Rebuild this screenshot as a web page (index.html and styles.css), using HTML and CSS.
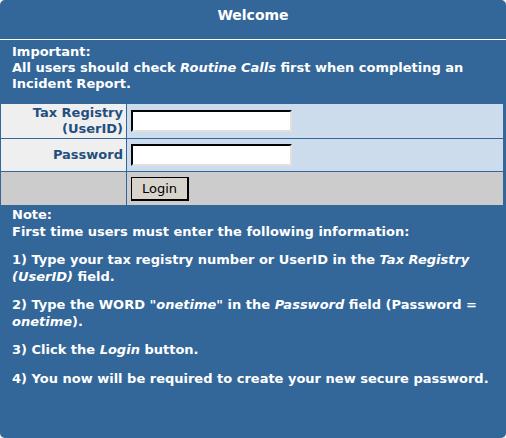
FILE: index.html
```html
<!DOCTYPE html>
<html>
<head>
<meta charset="utf-8">
<link rel="stylesheet" href="styles.css">
</head>
<body>
<div class="panel">
  <div class="header">Welcome</div>
  <div class="important">
    Important:<br>
    All users should check <i>Routine Calls</i> first when completing an Incident Report.
  </div>
  <div class="form">
    <div class="row row-user">
      <div class="label">Tax Registry<br>(UserID)</div>
      <div class="field"><input class="text" type="text"></div>
    </div>
    <div class="row row-pass">
      <div class="label">Password</div>
      <div class="field"><input class="text" type="password"></div>
    </div>
    <div class="row row-btn">
      <div class="label"></div>
      <div class="field"><button class="btn">Login</button></div>
    </div>
  </div>
  <div class="note">
    <p>Note:<br>First time users must enter the following information:</p>
    <p>1) Type your tax registry number or UserID in the <i>Tax Registry (UserID)</i> field.</p>
    <p>2) Type the WORD <i>"onetime"</i> in the <i>Password</i> field (Password = <i>onetime</i>).</p>
    <p>3) Click the <i>Login</i> button.</p>
    <p>4) You now will be required to create your new secure password.</p>
  </div>
</div>
</body>
</html>
```

FILE: styles.css
```css
html, body {
  margin: 0;
  padding: 0;
  background: #f4f4f4;
}
.panel {
  width: 506px;
  height: 438px;
  background: #336699;
  border-radius: 5px;
  color: #ffffff;
  font-family: "DejaVu Sans", Verdana, sans-serif;
  font-weight: bold;
  font-size: 13px;
  line-height: 16px;
  overflow: hidden;
}
.header {
  height: 40px;
  box-sizing: border-box;
  border-bottom: 1px solid #ffffff;
  text-align: center;
  font-size: 14px;
  line-height: 31px;
}
.important {
  padding: 3px 12px 0 12px;
  height: 60px;
  box-sizing: border-box;
  margin-top: 1px;
  margin-bottom: 3px;
}
.form {
  margin: 0 3px 0 1px;
  display: flex;
  flex-direction: column;
  gap: 1px;
}
.row {
  display: grid;
  grid-template-columns: 125px 1fr;
  column-gap: 1px;
}
.row-user { height: 34px; }
.row-pass { height: 32px; }
.row-btn { height: 33px; }
.label {
  background: #efefef;
  color: #1f4f7f;
  text-align: right;
  padding-right: 3px;
  display: flex;
  align-items: center;
  justify-content: flex-end;
}
.field {
  background: #ccdcec;
  display: flex;
  align-items: center;
  padding-left: 4px;
}
.row-btn .label, .row-btn .field {
  background: #cccccc;
}
.text {
  width: 161px;
  height: 22px;
  box-sizing: border-box;
  margin: 0;
  border: 2px inset #ffffff;
  border-color: #5a5a5a #e0e0e0 #e0e0e0 #5a5a5a;
  background: #ffffff;
  padding: 1px 2px;
  font-family: "DejaVu Sans", Verdana, sans-serif;
  font-size: 13px;
}
.btn {
  width: 58px;
  height: 24px;
  margin: 0;
  box-sizing: border-box;
  border: 1px solid #000000;
  border-right-width: 2px;
  border-bottom-width: 2px;
  background: #d8d4cc;
  font-family: "DejaVu Sans", Verdana, sans-serif;
  font-size: 13px;
  font-weight: normal;
  color: #000000;
  padding: 0;
}
.note {
  padding: 2px 12px 0 12px;
  line-height: 16.5px;
}
.note p {
  margin: 0 0 12px 0;
}
```
